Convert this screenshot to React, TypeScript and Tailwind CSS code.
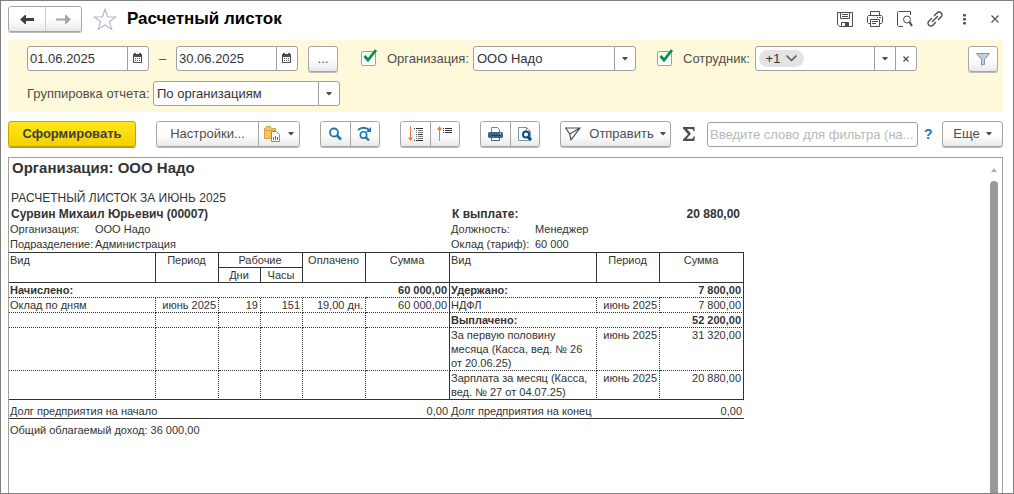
import type { ReactNode } from "react";

const btn =
  "flex items-center justify-center bg-linear-to-b from-white from-50% to-[#e9e9e9] hover:to-[#dddddd]";
const group =
  "flex h-[26px] shrink-0 overflow-hidden rounded-[3px] border border-[#a5a5a5] shadow-[0_1px_0_#bbbbbb]";
const field = "relative flex h-[25px] shrink-0 rounded-[3px] border border-[#a0a0a0] bg-white text-[#333333]";

function Caret() {
  return (
    <svg width="6" height="4" viewBox="0 0 6 4" fill="#4d4d4d" aria-hidden="true">
      <path d="M.5 0h5v1L3 3.500.500 1z" />
    </svg>
  );
}

function CalendarIcon() {
  return (
    <svg width="10" height="11" viewBox="0 0 10 11" aria-hidden="true">
      <path d="M0 1h9v9H0z" fill="#4d4d4d" />
      <path d="M1 0h2v2H1zM6 0h2v2H6z" fill="#4d4d4d" />
      <path d="M1 4h7v5H1z" fill="#fff" />
      <path d="M2 5h1v1H2zM4 5h1v1H4zM6 5h1v1H6zM2 7h1v1H2zM4 7h1v1H4zM6 7h1v1H6z" fill="#4d4d4d" />
    </svg>
  );
}

function DateField({ label, value }: { label: string; value: string }) {
  return (
    <div className={`${field} w-[122px]`}>
      <input aria-label={label} defaultValue={value} className="w-full min-w-0 flex-1 bg-transparent pl-0.5 outline-none" />
      <button aria-label="Выбрать дату" className="flex w-[21px] shrink-0 items-center justify-center border-l border-[#a0a0a0]">
        <CalendarIcon />
      </button>
    </div>
  );
}

function SelectField({ id, value, className }: { id: string; value: string; className: string }) {
  return (
    <div className={`${field} ${className}`}>
      <select id={id} className="w-full appearance-none bg-transparent pr-6 pl-[3px] outline-none">
        <option>{value}</option>
      </select>
      <span className="pointer-events-none absolute inset-y-0 right-0 flex w-[21px] items-center justify-center border-l border-[#a0a0a0]">
        <Caret />
      </span>
    </div>
  );
}

function Check({ id, label }: { id: string; label: string }) {
  return (
    <span className="relative size-[15px] shrink-0">
      <input
        id={id}
        type="checkbox"
        defaultChecked
        aria-label={label}
        className="peer block size-[15px] appearance-none rounded-[2px] border border-[#a0a0a0] bg-white"
      />
      <svg
        className="pointer-events-none absolute -top-1 left-0 hidden peer-checked:block"
        width="17"
        height="17"
        viewBox="0 0 17 17"
        fill="none"
        stroke="#009646"
        strokeWidth="2.8"
      >
        <path d="M3.500 9l3.500 4 8-10" />
      </svg>
    </span>
  );
}

function IconButton({ label, children }: { label: string; children: ReactNode }) {
  return (
    <button aria-label={label} className="flex size-5 items-center justify-center text-[#4d4d4d]">
      {children}
    </button>
  );
}

function TitleBar() {
  return (
    <header className="flex h-9 items-center">
      <div className={`${group} h-[25px] w-[74px]`}>
        <button aria-label="Назад" className={`${btn} w-[37px] border-r border-[#cccccc]`}>
          <svg width="14" height="11" viewBox="0 0 14 11" fill="#404040">
            <path d="M0 5.5L5 1h1v3h8v3H6v3H5z" />
          </svg>
        </button>
        <button aria-label="Вперед" className={`${btn} flex-1`}>
          <svg width="15" height="11" viewBox="0 0 15 11" fill="#a6a6a6">
            <path d="M15 5.500L10 1H9v3.500H0v2h9V10h1z" />
          </svg>
        </button>
      </div>
      <button aria-label="В избранное" className="ml-[11px]">
        <svg width="24" height="23" viewBox="0 0 24 23" fill="none" stroke="#b4bac2" strokeWidth="1.2">
          <path d="M12 1.5l2.7 7.3 8 .2-6.3 4.8 2.3 7.6L12 17l-6.7 4.4 2.3-7.6L1.3 9l8-.2z" />
        </svg>
      </button>
      <h1 className="ml-2.5 text-[17px] leading-6 font-bold text-black">Расчетный листок</h1>
      <div className="-mr-0.5 ml-auto flex items-center gap-2.5">
        <IconButton label="Сохранить">
          <svg width="16" height="16" viewBox="0 0 16 16" fill="none" stroke="currentColor">
            <path d="M.5 1.500h15v14h-13l-2-2z" />
            <path d="M3.5 1.500v6h9v-6M5 3.500h6M5 5.500h6M4.5 15.5v-4h7v4" />
            <path d="M8 12h3v3H8z" fill="currentColor" stroke="none" />
          </svg>
        </IconButton>
        <IconButton label="Печать">
          <svg width="16" height="16" viewBox="0 0 16 16" fill="none" stroke="currentColor">
            <path d="M3.5 4.5v-4h9v4M3.5 12.5h-2l-1-1v-6l1-1h13l1 1v6l-1 1h-2M3.5 8.5h9v7h-9z" />
            <path d="M5 10.5h6M5 12.5h4M10 6.5h1M12 6.5h2" />
          </svg>
        </IconButton>
        <IconButton label="Просмотр">
          <svg width="16" height="16" viewBox="0 0 16 16" fill="none" stroke="currentColor">
            <path d="M6 15.5H1.500l-1-1V1.500l1-1h12V4" />
            <circle cx="10" cy="8.5" r="3.5" />
            <path d="M12.500 11l2.500 4" strokeWidth="2" />
          </svg>
        </IconButton>
        <IconButton label="Ссылка">
          <svg width="16" height="16" viewBox="0 0 16 16" fill="none" stroke="currentColor" strokeWidth="1.4" strokeLinecap="round">
            <path d="M5.5 10.5l5-5" />
            <path d="M7.5 4.5l2.7-2.7a2.6 2.6 0 013.8 0l.2.2a2.6 2.6 0 010 3.8l-2.7 2.7" />
            <path d="M8.5 11.5l-2.7 2.7a2.6 2.6 0 01-3.8 0l-.2-.2a2.6 2.6 0 010-3.8l2.7-2.7" />
          </svg>
        </IconButton>
        <IconButton label="Дополнительно">
          <svg width="4" height="12" viewBox="0 0 4 12" fill="currentColor">
            <rect y="1" width="3" height="2.500" rx="1" />
            <rect y="5" width="3" height="2.500" rx="1" />
            <rect y="9" width="3" height="2.500" rx="1" />
          </svg>
        </IconButton>
        <IconButton label="Закрыть">
          <svg width="8" height="8" viewBox="0 0 8 8" stroke="currentColor" strokeWidth="1.1">
            <path d="M.5.5l7 7M7.500.500l-7 7" />
          </svg>
        </IconButton>
      </div>
    </header>
  );
}

function Filters() {
  return (
    <section className="mt-[3px] flex h-[72px] flex-col gap-2.5 bg-[#fff9db] pt-1.5 pr-[5px] pl-[19px] text-[#4d4d4d]">
      <div className="flex h-[25px] items-center">
        <DateField label="Начало периода" value="01.06.2025" />
        <span className="w-[27px] text-center">–</span>
        <DateField label="Конец периода" value="30.06.2025" />
        <button aria-label="Выбрать период" className={`${group} ${btn} ml-2.5 w-[30px]`}>
          ...
        </button>
        <div className="ml-[23px] flex items-center">
          <Check id="use-org" label="Отбор по организации" />
          <label htmlFor="org" className="ml-[11px] w-[86px]">
            Организация:
          </label>
          <SelectField id="org" value="ООО Надо" className="w-[163px]" />
        </div>
        <div className="ml-[21px] flex items-center">
          <Check id="use-emp" label="Отбор по сотруднику" />
          <label htmlFor="emp" className="ml-[11px] w-[72px]">
            Сотрудник:
          </label>
          <div className={`${field} w-[162px]`}>
            <button className="m-[3px] flex h-[17px] w-[45px] shrink-0 items-center justify-center gap-1.5 rounded-full bg-[#e3e3e3]">
              +1
              <svg width="11" height="7" viewBox="0 0 11 7" fill="none" stroke="#4d4d4d" strokeWidth="1.4">
                <path d="M.5.5l5 5 5-5" />
              </svg>
            </button>
            <input id="emp" className="w-full min-w-0 flex-1 bg-transparent outline-none" />
            <button aria-label="Выбрать сотрудника" className="flex w-[21px] shrink-0 items-center justify-center border-l border-[#a0a0a0]">
              <Caret />
            </button>
            <button aria-label="Очистить" className="flex w-[21px] shrink-0 items-center justify-center border-l border-[#a0a0a0]">
              <svg width="6" height="6" viewBox="0 0 6 6" stroke="#4d4d4d" strokeWidth="1.2">
                <path d="M.5.5l5 5M5.500.500l-5 5" />
              </svg>
            </button>
          </div>
        </div>
        <button aria-label="Настроить отбор" className={`${group} ${btn} ml-auto w-[30px]`}>
          <svg width="14" height="14" viewBox="0 0 14 14" fill="#c3d0dc" stroke="#8295a8">
            <path d="M.5 1.500h13L8.500 7.500v5l-3 .5V7.500z" />
          </svg>
        </button>
      </div>
      <div className="flex h-[25px] items-center">
        <label htmlFor="grouping" className="w-[126px]">
          Группировка отчета:
        </label>
        <SelectField id="grouping" value="По организациям" className="w-[187px]" />
      </div>
    </section>
  );
}

function Toolbar() {
  return (
    <div className="mt-2 flex h-7 items-center text-[#4d4d4d]">
      <button className="h-[26px] w-32 shrink-0 rounded-[3px] border border-[#c4a600] bg-linear-to-b from-[#ffe81a] to-[#f4d000] font-bold text-[#404040] shadow-[0_1px_0_#b09a20]">
        Сформировать
      </button>
      <div className={`${group} ml-5 w-36`}>
        <button className={`${btn} flex-1 border-r border-[#a5a5a5]`}>Настройки...</button>
        <button aria-label="Варианты отчета" className={`${btn} w-10 gap-2`}>
          <svg width="16" height="16" viewBox="0 0 16 16">
            <path d="M.5 12.5v-10h1l1-2h4l1 2h4v10z" fill="#f4c566" stroke="#d9a53c" />
            <path d="M1 4.5h11" stroke="#d9a53c" />
            <path d="M7.5 5.5h5l3 3v7h-8z" fill="#fff" stroke="#7c8fa3" />
            <path d="M9 11h1v3H9z" fill="#2e9b4f" />
            <path d="M11 10h1v4h-1z" fill="#e0382e" />
            <path d="M13 11h1v3h-1z" fill="#c43b4a" />
          </svg>
          <Caret />
        </button>
      </div>
      <div className={`${group} ml-5 w-[60px]`}>
        <button aria-label="Найти" className={`${btn} w-[30px] border-r border-[#a5a5a5]`}>
          <svg width="13" height="14" viewBox="0 0 13 14" fill="none" stroke="#2277b0">
            <circle cx="5" cy="5.5" r="4" strokeWidth="1.8" />
            <path d="M8 8.5l4 4" strokeWidth="2.6" />
          </svg>
        </button>
        <button aria-label="Найти далее" className={`${btn} flex-1`}>
          <svg width="16" height="16" viewBox="0 0 16 16" fill="none" stroke="#2277b0">
            <circle cx="6.5" cy="9" r="3.2" strokeWidth="1.6" />
            <path d="M9 11.5l3 3" strokeWidth="2.4" />
            <path d="M1 4C4 1 9 1 12 4" strokeWidth="1.8" />
            <path d="M14 1v5H9z" fill="#2277b0" stroke="none" />
          </svg>
        </button>
      </div>
      <div className={`${group} ml-5 w-[60px]`}>
        <button aria-label="Развернуть группы" className={`${btn} w-[30px] border-r border-[#a5a5a5]`}>
          <svg width="15" height="16" viewBox="0 0 15 16" fill="none">
            <path d="M2.5 0v14" stroke="#f4733c" />
            <path d="M0 11.5h5L2.5 15z" fill="#f4733c" />
            <path d="M6 2.5h1M8 2.5h7M8 8.5h1M10 8.5h5M6 14.5h1M8 14.5h7" stroke="#333" />
            <path d="M8 4.5h1M10 4.5h5M8 6.5h1M10 6.5h5M8 10.5h1M10 10.5h5M8 12.5h1M10 12.5h5" stroke="#777" />
          </svg>
        </button>
        <button aria-label="Свернуть группы" className={`${btn} flex-1`}>
          <svg width="16" height="16" viewBox="0 0 16 16" fill="none">
            <path d="M2.5 1v14" stroke="#f4733c" />
            <path d="M0 4h5L2.5 0z" fill="#f4733c" />
            <path d="M6 2.5h1M8 2.5h7M6 4.5h1M8 4.5h7M6 6.5h1M8 6.5h7" stroke="#333" />
          </svg>
        </button>
      </div>
      <div className={`${group} ml-5 w-[60px]`}>
        <button aria-label="Печать отчета" className={`${btn} w-[30px] border-r border-[#a5a5a5]`}>
          <svg width="15" height="14" viewBox="0 0 15 14">
            <path d="M3.5 5.500v-5h6l2 2v3" fill="#fff" stroke="#6e8499" />
            <path d="M1 5h13l1 1v4l-1 1H1l-1-1V6z" fill="#3d6689" />
            <path d="M3 8h9v1H3z" fill="#1c3f60" />
            <path d="M3.5 10.5h8v3h-8z" fill="#fff" stroke="#3d6689" />
            <path d="M12 6h1v1h-1z" fill="#fff" />
          </svg>
        </button>
        <button aria-label="Предварительный просмотр" className={`${btn} flex-1`}>
          <svg width="14" height="16" viewBox="0 0 14 16" fill="none">
            <path d="M.5 1.5h8l4 4v9H.5z" fill="#fff" stroke="#7d93a8" />
            <path d="M8.5 1.5v4h4" stroke="#7d93a8" />
            <circle cx="8" cy="8.5" r="3" stroke="#0b4f80" strokeWidth="2" />
            <path d="M10 11l3 3" stroke="#0b4f80" strokeWidth="3" />
          </svg>
        </button>
      </div>
      <button className={`${group} ${btn} ml-5 w-[111px]`}>
        <svg width="16" height="14" viewBox="0 0 16 14" fill="none" stroke="#4d4d4d" strokeWidth="1.2">
          <path d="M.7 1H15L6 12.8 4.7 7zM4.7 7L15 1" />
        </svg>
        <span className="mr-1.5 ml-2">Отправить</span>
        <Caret />
      </button>
      <button aria-label="Сумма" className="ml-3 shrink-0">
        <svg width="12" height="14" viewBox="0 0 12 14" fill="#4d4d4d">
          <path d="M0 0h11.5v4h-1.200L9.500 2H4l4 4.800L3.500 11.800h6l1-2.300h1.300L11.300 14H0v-1.500l5-5.300L0 1.500z" />
        </svg>
      </button>
      <input
        aria-label="Фильтр"
        placeholder="Введите слово для фильтра (на..."
        className="ml-3 h-[25px] min-w-0 flex-1 rounded-[3px] border border-[#a0a0a0] bg-white px-0.5 outline-none placeholder:text-[#b8b8b8]"
      />
      <a href="#help" className="ml-1.5 w-2 text-[14px] font-bold text-[#0f7fc8]">
        ?
      </a>
      <button className={`${group} ${btn} ml-2.5 w-[61px] gap-1.5`}>
        Еще
        <Caret />
      </button>
    </div>
  );
}

const dot = "border-b border-b-[#333333] [border-bottom-style:dotted]";
const dotR = "border-r border-r-[#333333] [border-right-style:dotted]";
const solid = "border-b border-b-[#333333]";
const solidR = "border-r border-r-[#333333]";

const cols = ["w-[147px]", "w-[63px]", "w-[42px]", "w-[42px]", "w-[63px]", "w-[84px]", "w-[147px]", "w-[63px]", "w-[84px]"];

function BlankCells({ line }: { line: string }) {
  return (
    <>
      {[0, 1, 2, 3, 4].map((i) => (
        <td key={i} className={`${line} ${dotR}`} />
      ))}
      <td className={`${line} ${solidR}`} />
    </>
  );
}

function Payslip() {
  return (
    <div className="w-[735px] font-['Liberation_Sans',Arial,sans-serif] text-[11px] leading-[14px] text-[#333333]">
      <h2 className="h-8 pl-[3px] text-[15px] leading-5 font-bold">Организация: ООО Надо</h2>
      <p className="pl-0.5 text-[12px] leading-4">РАСЧЕТНЫЙ ЛИСТОК ЗА ИЮНЬ 2025</p>
      <div className="grid h-4 grid-cols-[441px_147px_1fr] text-[12px] leading-4 font-bold">
        <span className="pl-0.5">Сурвин Михаил Юрьевич (00007)</span>
        <span className="pl-0.5">К выплате:</span>
        <span className="pr-1 text-right">20 880,00</span>
      </div>
      <dl className="grid grid-cols-[85px_356px_84px_1fr] pl-px leading-[15px]">
        <dt>Организация:</dt>
        <dd>ООО Надо</dd>
        <dt>Должность:</dt>
        <dd>Менеджер</dd>
        <dt className="whitespace-nowrap">Подразделение:</dt>
        <dd>Администрация</dd>
        <dt className="whitespace-nowrap">Оклад (тариф):</dt>
        <dd>60 000</dd>
      </dl>
      <table className="w-full table-fixed border-separate border-spacing-0 border-t border-[#333333] [&_td]:py-0 [&_td]:pr-0.5 [&_td]:pl-px [&_td]:align-top [&_th]:py-0 [&_th]:pr-0.5 [&_th]:pl-px [&_th]:align-top [&_th]:font-normal">
        <colgroup>
          {cols.map((w, i) => (
            <col key={i} className={w} />
          ))}
        </colgroup>
        <thead>
          <tr className="h-[15px]">
            <th rowSpan={2} className={`${solid} ${solidR} text-left`}>Вид</th>
            <th rowSpan={2} className={`${solid} ${solidR}`}>Период</th>
            <th colSpan={2} className={`${solid} ${solidR}`}>Рабочие</th>
            <th rowSpan={2} className={`${solid} ${solidR}`}>Оплачено</th>
            <th rowSpan={2} className={`${solid} ${solidR}`}>Сумма</th>
            <th rowSpan={2} className={`${solid} ${solidR} text-left`}>Вид</th>
            <th rowSpan={2} className={`${solid} ${solidR}`}>Период</th>
            <th rowSpan={2} className={`${solid} ${solidR}`}>Сумма</th>
          </tr>
          <tr className="h-[15px]">
            <th className={`${solid} ${solidR}`}>Дни</th>
            <th className={`${solid} ${solidR}`}>Часы</th>
          </tr>
        </thead>
        <tbody>
          <tr className="h-[15px] font-bold">
            <td colSpan={5} className={dot}>Начислено:</td>
            <td className={`${dot} ${solidR} text-right`}>60 000,00</td>
            <td colSpan={2} className={dot}>Удержано:</td>
            <td className={`${dot} ${solidR} text-right`}>7 800,00</td>
          </tr>
          <tr className="h-[15px] text-right">
            <td className={`${dot} ${dotR} text-left`}>Оклад по дням</td>
            <td className={`${dot} ${dotR} whitespace-nowrap`}>июнь 2025</td>
            <td className={`${dot} ${dotR}`}>19</td>
            <td className={`${dot} ${dotR}`}>151</td>
            <td className={`${dot} ${dotR}`}>19,00 дн.</td>
            <td className={`${dot} ${solidR}`}>60 000,00</td>
            <td className={`${dot} ${dotR} text-left`}>НДФЛ</td>
            <td className={`${dot} ${dotR} whitespace-nowrap`}>июнь 2025</td>
            <td className={`${dot} ${solidR}`}>7 800,00</td>
          </tr>
          <tr className="h-[15px] font-bold">
            <BlankCells line={dot} />
            <td colSpan={2} className={dot}>Выплачено:</td>
            <td className={`${dot} ${solidR} text-right`}>52 200,00</td>
          </tr>
          <tr className="h-[43px] text-right">
            <BlankCells line={dot} />
            <td className={`${dot} ${dotR} text-left`}>За первую половину месяца (Касса, вед. № 26 от 20.06.25)</td>
            <td className={`${dot} ${dotR} whitespace-nowrap`}>июнь 2025</td>
            <td className={`${dot} ${solidR}`}>31 320,00</td>
          </tr>
          <tr className="h-[29px] text-right">
            <BlankCells line={solid} />
            <td className={`${solid} ${dotR} text-left`}>Зарплата за месяц (Касса, вед. № 27 от 04.07.25)</td>
            <td className={`${solid} ${dotR} whitespace-nowrap`}>июнь 2025</td>
            <td className={`${solid} ${solidR}`}>20 880,00</td>
          </tr>
        </tbody>
        <tfoot>
          <tr className="h-[19px] [&>td]:align-bottom">
            <td colSpan={5} className={solid}>Долг предприятия на начало</td>
            <td className={`${solid} text-right`}>0,00</td>
            <td colSpan={2} className={solid}>Долг предприятия на конец</td>
            <td className={`${solid} text-right`}>0,00</td>
          </tr>
        </tfoot>
      </table>
      <p className="mt-[3px] pl-px leading-4">Общий облагаемый доход: 36 000,00</p>
    </div>
  );
}

export default function App() {
  return (
    <div className="flex h-screen flex-col overflow-hidden border border-[#808080] bg-white pr-2.5 pl-[7px] font-['Liberation_Sans',Arial,sans-serif] text-[13px] leading-4 text-[#333333]">
      <TitleBar />
      <Filters />
      <Toolbar />
      <main className="mt-[9px] flex min-h-0 flex-1 border border-b-0 border-[#a0a0a0]">
        <div className="min-w-0 flex-1 overflow-hidden">
          <Payslip />
        </div>
        <div className="flex w-3 shrink-0 flex-col items-start pt-2.5" aria-hidden="true">
          <svg className="ml-px" width="6" height="4" viewBox="0 0 6 4" fill="#b0b0b0">
            <path d="M3 0l3 4H0z" />
          </svg>
          <div className="mt-[9px] w-2 flex-1 rounded-t-full bg-[#999999]" />
        </div>
      </main>
    </div>
  );
}
